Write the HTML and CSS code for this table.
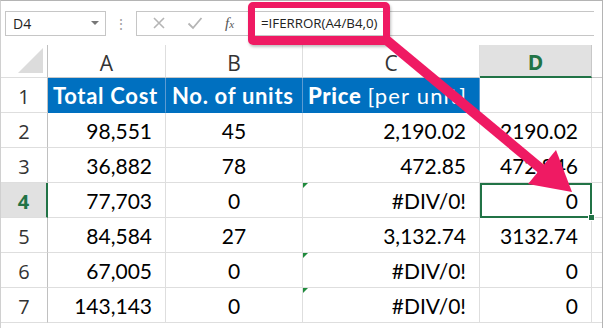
FILE: index.html
```html
<!DOCTYPE html>
<html lang="en">
<head>
    <meta charset="UTF-8">
    <title>IFERROR example</title>
    <link rel="stylesheet" href="styles.css">
</head>
<body>
    <div class="window">
        <div class="toolbar">
            <div class="name-box">
                <span>D4</span>
                <span class="caret"></span>
            </div>
            <div class="grip">&#8942;</div>
            <div class="formula-bar">
                <div class="fx-icons">
                    <svg width="14" height="14" viewBox="0 0 14 14"><path d="M2 2 L12 12 M12 2 L2 12" stroke="#b5b5b5" stroke-width="1.6" fill="none"/></svg>
                    <svg width="16" height="14" viewBox="0 0 16 14"><path d="M1.5 7.5 L6 12 L14.5 2" stroke="#b5b5b5" stroke-width="1.8" fill="none"/></svg>
                    <span class="fx">f<i>x</i></span>
                </div>
                <div class="formula">=IFERROR(A4/B4,0)</div>
            </div>
        </div>

        <div class="grid">
            <div class="corner"><span class="corner-tri"></span></div>
            <div class="col-head">A</div>
            <div class="col-head">B</div>
            <div class="col-head">C</div>
            <div class="col-head active">D</div>
            <div class="col-head"></div>

            <div class="row-head">1</div>
            <div class="cell title">Total Cost</div>
            <div class="cell title">No. of units</div>
            <div class="cell title"><b>Price</b> <span class="unit">[per unit]</span></div>
            <div class="cell"></div>
            <div class="cell"></div>

            <div class="row-head">2</div>
            <div class="cell num">98,551</div>
            <div class="cell mid">45</div>
            <div class="cell num">2,190.02</div>
            <div class="cell num">2190.02</div>
            <div class="cell"></div>

            <div class="row-head">3</div>
            <div class="cell num">36,882</div>
            <div class="cell mid">78</div>
            <div class="cell num">472.85</div>
            <div class="cell num">472.846</div>
            <div class="cell"></div>

            <div class="row-head active">4</div>
            <div class="cell num">77,703</div>
            <div class="cell mid">0</div>
            <div class="cell num flagged">#DIV/0!</div>
            <div class="cell num selected">0<span class="handle"></span></div>
            <div class="cell"></div>

            <div class="row-head">5</div>
            <div class="cell num">84,584</div>
            <div class="cell mid">27</div>
            <div class="cell num">3,132.74</div>
            <div class="cell num">3132.74</div>
            <div class="cell"></div>

            <div class="row-head">6</div>
            <div class="cell num">67,005</div>
            <div class="cell mid">0</div>
            <div class="cell num flagged">#DIV/0!</div>
            <div class="cell num">0</div>
            <div class="cell"></div>

            <div class="row-head">7</div>
            <div class="cell num">143,143</div>
            <div class="cell mid">0</div>
            <div class="cell num flagged">#DIV/0!</div>
            <div class="cell num">0</div>
            <div class="cell"></div>
        </div>

        <!-- callout overlay -->
        <div class="callout"></div>
        <svg class="arrow" width="603" height="328" viewBox="0 0 603 328">
            <line x1="384" y1="38" x2="545" y2="172" stroke="#ef1a63" stroke-width="10"/>
            <polygon points="572,192 528,184 556,150" fill="#ef1a63"/>
        </svg>
    </div>
</body>
</html>
```

FILE: styles.css
```css
body {
    margin: 0;
    background-color: white;
}
.window {
    position: relative;
    width: 601px;
    height: 327px;
    border: 1px solid #b4b4b4;
    border-left-color: #d0d0d0;
    overflow: hidden;
    font-family: 'Open Sans', sans-serif;
    background-color: white;
}
.toolbar {
    height: 44px;
    display: flex;
    align-items: center;
    padding-left: 4px;
    box-sizing: border-box;
    padding-bottom: 5px;
    padding-top: 5px;
}
.name-box {
    width: 101px;
    height: 25px;
    box-sizing: border-box;
    border: 1px solid #c6c6c6;
    display: flex;
    align-items: center;
    justify-content: space-between;
    padding: 0 6px 0 7px;
    font-size: 14px;
    color: #222;
}
.caret {
    width: 0;
    height: 0;
    border-left: 4px solid transparent;
    border-right: 4px solid transparent;
    border-top: 4px solid #777;
}
.grip {
    width: 30px;
    text-align: center;
    color: #a0a0a0;
    font-size: 14px;
}
.formula-bar {
    flex: 1;
    height: 25px;
    box-sizing: border-box;
    border: 1px solid #c6c6c6;
    border-right: none;
    display: flex;
    align-items: center;
    margin-right: 8px;
}
.fx-icons {
    width: 108px;
    display: flex;
    align-items: center;
    justify-content: space-around;
    padding-left: 4px;
    box-sizing: border-box;
}
.fx {
    font-family: 'Liberation Serif', serif;
    font-style: italic;
    font-size: 15px;
    color: #555;
}
.fx i {
    font-size: 11px;
}
.formula {
    padding-left: 16px;
    font-size: 13.3px;
    color: #222;
}
.grid {
    display: grid;
    grid-template-columns: 47px 118px 137px 177px 112px 1fr;
    grid-template-rows: 33px repeat(7, 35px);
}
.grid > div {
    box-sizing: border-box;
    border-right: 1px solid #dedede;
    border-bottom: 1px solid #dedede;
    display: flex;
    align-items: center;
    white-space: nowrap;
}
.corner {
    position: relative;
    border-right-color: #c0c0c0 !important;
}
.corner-tri {
    position: absolute;
    right: 4px;
    bottom: 4px;
    width: 0;
    height: 0;
    border-left: 25px solid transparent;
    border-bottom: 25px solid #dcdcdc;
}
.col-head {
    justify-content: center;
    font-size: 21px;
    color: #333;
    border-bottom-color: #c8c8c8 !important;
    padding-top: 3px;
}
.col-head.active {
    background-color: #e1e1e1;
    color: #217346;
    font-weight: bold;
    border-bottom: 2px solid #217346 !important;
    border-right-color: #c8c8c8 !important;
}
.row-head {
    justify-content: center;
    font-size: 20px;
    color: #333;
    border-right-color: #c0c0c0 !important;
    padding-top: 2px;
}
.row-head.active {
    background-color: #e1e1e1;
    color: #217346;
    font-weight: bold;
    border-right: 2px solid #217346 !important;
}
.cell {
    font-family: 'Lato', sans-serif;
    font-size: 21px;
    color: #000;
    padding: 0 13px 0 5px;
}
.cell.title {
    background-color: #0070c0;
    color: white;
    font-weight: bold;
    font-size: 22px;
    letter-spacing: 0.7px;
    border-right-color: #5c9bd2 !important;
    border-bottom-color: #0070c0 !important;
    padding-left: 5px;
}
.cell.title:nth-child(9) {
    padding-left: 6px;
}
.cell.title b {
    margin-right: 6px;
}
.cell.title .unit {
    font-weight: normal;
    letter-spacing: 1.2px;
}
.cell.num {
    justify-content: flex-end;
}
.cell.mid {
    justify-content: center;
    padding: 0;
}
.flagged {
    position: relative;
}
.flagged::before {
    content: "";
    position: absolute;
    top: 0;
    left: 0;
    border-top: 5px solid #1f8a3c;
    border-right: 5px solid transparent;
}
.selected {
    position: relative;
    outline: 2px solid #217346;
    outline-offset: -2px;
}
.handle {
    position: absolute;
    right: -4px;
    bottom: -4px;
    width: 5px;
    height: 5px;
    background-color: #217346;
    border: 1px solid white;
}
.callout {
    position: absolute;
    left: 247px;
    top: 1px;
    width: 142px;
    height: 43px;
    box-sizing: border-box;
    border: 7px solid #ef1a63;
    border-top-width: 6px;
    border-bottom-width: 9px;
    border-radius: 5px;
    box-shadow: 1px 2px 3px rgba(0, 0, 0, 0.25);
}
.arrow {
    position: absolute;
    left: -1px;
    top: -1px;
    pointer-events: none;
}
```
